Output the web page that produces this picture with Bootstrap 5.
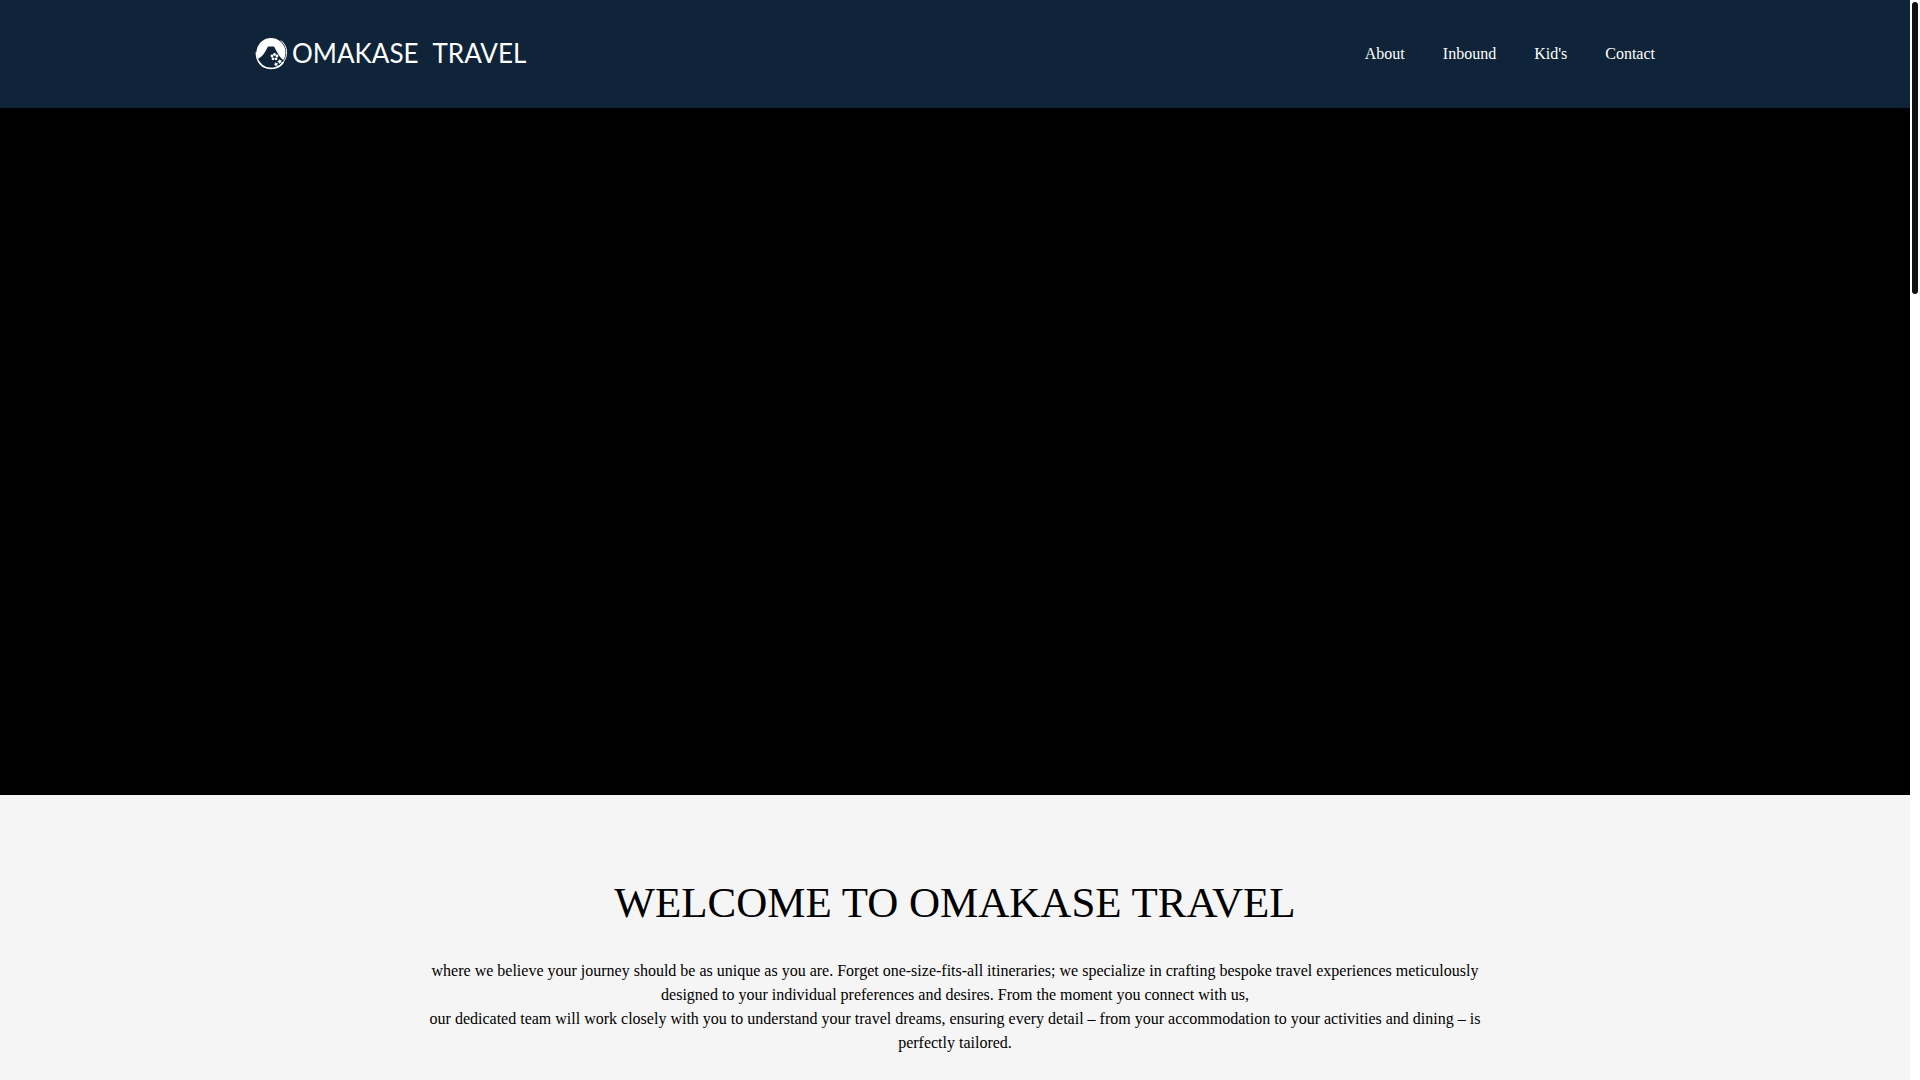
<!DOCTYPE html>
<html lang="en">
<head>
<meta charset="utf-8">
<meta name="viewport" content="width=device-width, initial-scale=1">
<title>Omakase Travel</title>
<link href="https://cdn.jsdelivr.net/npm/bootstrap@5.3.0/dist/css/bootstrap.min.css" rel="stylesheet">
<style>
  body { font-family: "Liberation Serif", serif; font-size: 16px; line-height: 24px; color: #000; background: #f5f5f5; padding-right: 10px; }
  .site-header { background: #0f2438; min-height: 108px; }
  .site-inner { max-width: 1400px; }
  .site-brand { font-family: Lato, sans-serif; font-size: 26px; line-height: 32px; color: #fff; gap: 4px; padding-bottom: 2px; }
  .site-brand svg { width: 33px; height: 33px; }
  .brand-words { gap: 14px; }
  .site-nav { gap: 38px; }
  .site-nav .nav-link { color: #fff; }
  .hero-video { background: #000; min-height: 687px; }
  .welcome { padding-top: 80px; }
  .welcome-inner { max-width: 1060px; }
  .welcome-title { font-size: 43px; line-height: 56px; font-weight: 400; margin-bottom: 28px; }
  .scroll-track { width: 10px; background: #fff; padding: 2px; }
  .scroll-thumb { height: 27vh; border-radius: 3px; background: #111; }
</style>
<script src="https://cdn.jsdelivr.net/npm/bootstrap@5.3.0/dist/js/bootstrap.bundle.min.js" defer></script>
</head>
<body class="d-flex flex-column min-vh-100">
<header class="site-header d-flex align-items-center">
  <div class="site-inner container-fluid px-0 d-flex flex-wrap align-items-center justify-content-between">
    <a class="site-brand d-flex align-items-center text-decoration-none" href="#" aria-label="Omakase Travel">
      <svg viewBox="0 0 33 33" aria-hidden="true">
        <circle cx="16" cy="15.500" r="14.500" fill="#fff"/>
        <path d="M13 9.500h6L22 15c2 4 4.500 7 7.500 9-3 5-7.500 7.500-13.500 7.500S5 29 2 22.500c4-2 6.500-5 8-7.500z" fill="#0f2438"/>
        <path d="M1.500 15a14.800 14.800 0 0 0 27 10" fill="none" stroke="#fff" stroke-width="1.500"/>
        <path d="M26 3.500a15.500 15.500 0 0 1 1.500 22.500A15.500 15.500 0 0 1 6 28" fill="none" stroke="#fff" stroke-width="1"/>
        <g fill="#fff">
          <circle cx="19.500" cy="17.500" r="1.400"/><circle cx="22" cy="19" r="1.400"/><circle cx="21" cy="21.800" r="1.400"/><circle cx="18" cy="21.800" r="1.400"/><circle cx="17" cy="19" r="1.400"/>
          <path d="m24 22 1 1.300 1.700-.3-.7 1.500.9 1.300-1.700-.1-1.100 1.300-.4-1.600-1.600-.6 1.400-.9z"/>
          <path d="m20.500 25 .9 1.200 1.600-.1-.8 1.300.7 1.400-1.500-.4-1.200 1-.1-1.500-1.400-.8 1.500-.6z"/>
        </g>
      </svg>
      <span class="brand-words d-flex"><span>OMAKASE</span><span>TRAVEL</span></span>
    </a>
    <nav class="site-nav nav" aria-label="Main">
      <a class="nav-link p-0" href="#about">About</a>
      <a class="nav-link p-0" href="#inbound">Inbound</a>
      <a class="nav-link p-0" href="#kids">Kid's</a>
      <a class="nav-link p-0" href="#contact">Contact</a>
    </nav>
  </div>
</header>
<main class="d-flex flex-column flex-grow-1">
  <section class="hero-video" aria-label="Video"></section>
  <section class="welcome flex-grow-1 text-center" id="about">
    <div class="welcome-inner container-fluid px-0">
      <h1 class="welcome-title">WELCOME TO OMAKASE TRAVEL</h1>
      <p class="mb-0">where we believe your journey should be as unique as you are. Forget one-size-fits-all itineraries; we specialize in crafting bespoke travel experiences meticulously designed to your individual preferences and desires. From the moment you connect with us,<br>our dedicated team will work closely with you to understand your travel dreams, ensuring every detail – from your accommodation to your activities and dining – is perfectly tailored.</p>
    </div>
  </section>
</main>
<div class="scroll-track position-fixed top-0 end-0 vh-100" aria-hidden="true"><div class="scroll-thumb"></div></div>
</body>
</html>
